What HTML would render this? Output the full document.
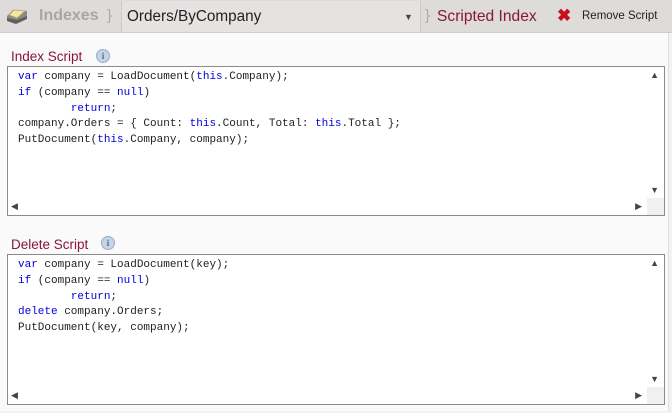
<!DOCTYPE html>
<html><head><style>
*{margin:0;padding:0;box-sizing:border-box}
body{width:672px;height:413px;background:#f3f2f2;font-family:"Liberation Sans",sans-serif;position:relative;overflow:hidden}
.hdr{position:absolute;left:0;top:0;width:672px;height:33px;background:#dedbdb;border-bottom:1px solid #d0cccc}
.dd{position:absolute;left:121px;top:1px;width:300px;height:31px;background:#e5e2e2;border-left:1px solid #cfcbcb;border-right:1px solid #cfcbcb}
.t{position:absolute;white-space:nowrap}
.main{position:absolute;left:0;top:33px;width:669px;height:378px;background:#fafafa;border-right:1px solid #e0dcdc}
.lbl{position:absolute;font-size:13.5px;color:#8b1538}
.info{position:absolute;width:14px;height:14px;border-radius:50%;background:#c5d3e3;border:1px solid #9aaec6;color:#4a6a96;font:bold 9px "Liberation Serif",serif;text-align:center;line-height:12px}
.ed{position:absolute;left:7px;width:658px;background:#fff;border:1px solid #8a8a8a}
.code{position:absolute;left:10px;top:3px;font:11px/15.8px "Liberation Mono",monospace;color:#222;white-space:pre}
.k{color:#0000dd}
.vs{position:absolute;right:0;top:0;width:17px;bottom:17px;background:#fff}
.hs{position:absolute;left:0;bottom:0;right:17px;height:17px;background:#fff}
.cor{position:absolute;right:0;bottom:0;width:17px;height:17px;background:#f0f0f0}
.ar{position:absolute;font-size:9px;color:#444}
</style></head><body>
<div class="hdr">
 <svg style="position:absolute;left:5px;top:6px" width="24" height="20" viewBox="0 0 24 20"><path d="M2 10 L8 4 L22 5 L22 12 L10 17 L2 14Z" fill="#8a8a8a"/><path d="M4 9 L9 4 L20 5 L12 12Z" fill="#f3e6a6" stroke="#b9a560" stroke-width="0.8"/><path d="M2 12 L12 14 L22 10 L22 13 L11 18 L2 15Z" fill="#5e5e5e"/></svg>
 <div class="t" style="left:39px;top:7px;font-size:16px;font-weight:bold;color:#a9a6a6">Indexes</div>
 <div class="t" style="left:107px;top:7px;font-size:15px;color:#aaa">}</div>
 <div class="dd"></div>
 <div class="t" style="left:127px;top:8px;font-size:15.3px;color:#222">Orders/ByCompany</div>
 <div class="t" style="left:404px;top:12px;font-size:9px;color:#444">▼</div>
 <div class="t" style="left:425px;top:7px;font-size:15px;color:#aaa">}</div>
 <div class="t" style="left:437px;top:8px;font-size:15.6px;color:#8b1538">Scripted Index</div>
 <div class="t" style="left:557px;top:6px;font-size:17px;font-weight:bold;color:#c4111b">✖</div>
 <div class="t" style="left:582px;top:10px;font-size:11.5px;color:#222">Remove Script</div>
</div>
<div class="main"></div>
<div class="lbl t" style="left:11px;top:49px">Index Script</div>
<div class="info" style="left:96px;top:49px">i</div>
<div class="ed" style="top:66px;height:150px">
 <div class="code"><span class="k">var</span> company = LoadDocument(<span class="k">this</span>.Company);
<span class="k">if</span> (company == <span class="k">null</span>)
        <span class="k">return</span>;
company.Orders = { Count: <span class="k">this</span>.Count, Total: <span class="k">this</span>.Total };
PutDocument(<span class="k">this</span>.Company, company);</div>
 <div class="vs"></div><div class="hs"></div><div class="cor"></div>
 <div class="ar" style="right:5px;top:3px">▲</div><div class="ar" style="right:5px;bottom:20px">▼</div>
 <div class="ar" style="left:3px;bottom:3px">◀</div><div class="ar" style="right:22px;bottom:3px">▶</div>
</div>
<div class="lbl t" style="left:11px;top:237px">Delete Script</div>
<div class="info" style="left:101px;top:236px">i</div>
<div class="ed" style="top:254px;height:151px">
 <div class="code"><span class="k">var</span> company = LoadDocument(key);
<span class="k">if</span> (company == <span class="k">null</span>)
        <span class="k">return</span>;
<span class="k">delete</span> company.Orders;
PutDocument(key, company);</div>
 <div class="vs"></div><div class="hs"></div><div class="cor"></div>
 <div class="ar" style="right:5px;top:3px">▲</div><div class="ar" style="right:5px;bottom:20px">▼</div>
 <div class="ar" style="left:3px;bottom:3px">◀</div><div class="ar" style="right:22px;bottom:3px">▶</div>
</div>
</body></html>
